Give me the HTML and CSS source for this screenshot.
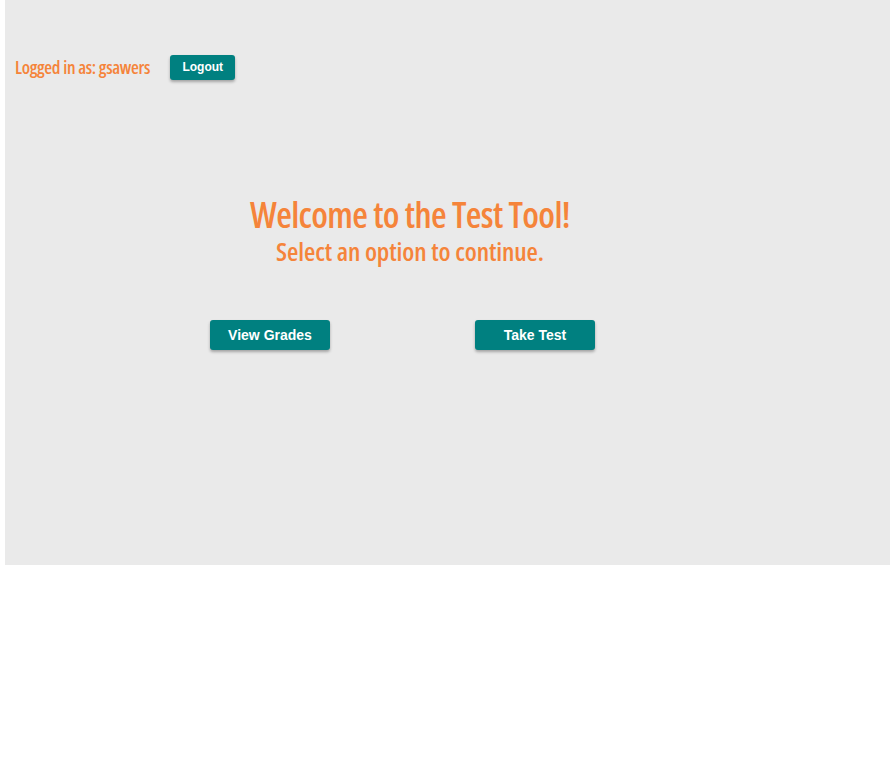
FILE: index.html
```html
<!DOCTYPE html>
<html>
<head>
<meta charset="utf-8">
<link rel="stylesheet" href="styles.css">
</head>
<body>
<div class="page">
  <div class="topbar">
    <span class="user">Logged in as: gsawers</span>
    <button class="btn btn-small">Logout</button>
  </div>
  <div class="hero">
    <h1 class="title">Welcome to the Test Tool!</h1>
    <h2 class="subtitle">Select an option to continue.</h2>
  </div>
  <div class="actions">
    <button class="btn btn-main">View Grades</button>
    <button class="btn btn-main">Take Test</button>
  </div>
</div>
</body>
</html>
```
FILE: styles.css
```css
html, body {
  margin: 0;
  padding: 0;
  background: #ffffff;
}
.page {
  margin-left: 5px;
  height: 565px;
  background: #eaeaea;
  box-sizing: border-box;
  padding-top: 55px;
}
.topbar {
  display: flex;
  align-items: center;
  padding-left: 10px;
  gap: 20px;
  height: 24px;
}
.user {
  font-family: "Open Sans", sans-serif;
  font-stretch: 75%;
  font-weight: 600;
  color: #f5843a;
  font-size: 18px;
  letter-spacing: -0.3px;
}
.btn {
  background: #008080;
  color: #ffffff;
  border: none;
  border-radius: 3px;
  font-family: "Liberation Sans", Arial, sans-serif;
  font-weight: bold;
  box-shadow: 0 2px 3px rgba(0,0,0,0.3);
  padding: 0;
  cursor: pointer;
}
.btn-small {
  width: 65px;
  height: 25px;
  font-size: 12px;
}
.hero {
  width: 810px;
  text-align: center;
  margin-top: 116px;
  color: #f5843a;
  font-family: "Open Sans", sans-serif;
  font-stretch: 75%;
}
.title {
  margin: 0;
  font-size: 36px;
  font-weight: 600;
  line-height: 40px;
  letter-spacing: -0.65px;
}
.subtitle {
  margin: 0;
  font-size: 26px;
  font-weight: 600;
  line-height: 32px;
  letter-spacing: -0.1px;
}
.actions {
  display: flex;
  margin-top: 53px;
  padding-left: 205px;
  gap: 145px;
}
.btn-main {
  width: 120px;
  height: 30px;
  font-size: 14px;
}
```
